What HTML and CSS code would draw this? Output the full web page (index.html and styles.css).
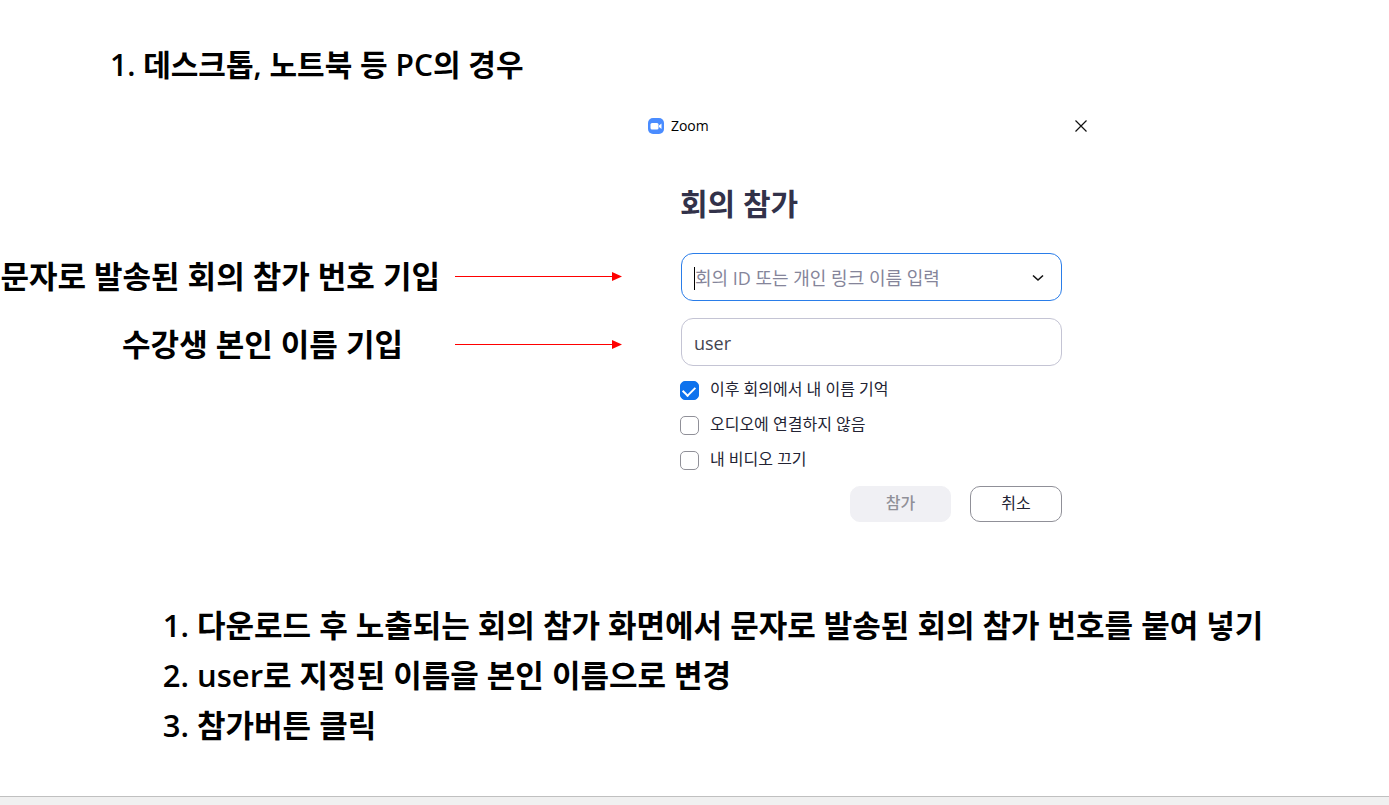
FILE: index.html
```
<!DOCTYPE html>
<html lang="ko">
<head>
  <meta charset="UTF-8" />
  <meta name="viewport" content="width=device-width, initial-scale=1.0"/>
  <title>Zoom 회의 참가 안내</title>
  <link rel="stylesheet" href="styles.css">
</head>
<body>

  <main>
    <h1>1. 데스크톱, 노트북 등 PC의 경우</h1>

    <div class="guide">
      <div class="notes">
        <div class="note">
          <p>문자로 발송된 회의 참가 번호 기입</p>
          <svg class="arrow" width="167" height="10" viewBox="0 0 167 10"><path d="M0 5.5h158" stroke="#f00"/><path d="M157 1l10 4.500-10 4.500z" fill="#f00"/></svg>
        </div>
        <div class="note note-name">
          <p>수강생 본인 이름 기입</p>
          <svg class="arrow" width="167" height="10" viewBox="0 0 167 10"><path d="M0 5.5h158" stroke="#f00"/><path d="M157 1l10 4.500-10 4.500z" fill="#f00"/></svg>
        </div>
      </div>

      <section class="dialog">
        <div class="titlebar">
          <svg width="18" height="18" viewBox="0 0 18 18">
            <rect x="1" y="1" width="16" height="16" rx="5" fill="#4a8cff"/>
            <rect x="3.500" y="6" width="8" height="6.500" rx="1.500" fill="#fff"/>
            <path d="M12 8.500l2.500-2v5.500l-2.500-2z" fill="#fff"/>
          </svg>
          <span>Zoom</span>
          <button class="close" type="button" aria-label="닫기">
            <svg width="14" height="14" viewBox="0 0 14 14"><path d="M1.500 1.500l11 11M12.500 1.500l-11 11" stroke="#111" stroke-width="1.200"/></svg>
          </button>
        </div>

        <form class="join">
          <h2>회의 참가</h2>
          <div class="field active">
            <span class="caret"></span>
            <input type="text" placeholder="회의 ID 또는 개인 링크 이름 입력" aria-label="회의 ID">
            <button class="drop" type="button" aria-label="최근 회의">
              <svg width="12" height="8" viewBox="0 0 12 8"><path d="M1 1.500l5 4.500 5-4.500" fill="none" stroke="#111" stroke-width="1.600"/></svg>
            </button>
          </div>
          <div class="field">
            <input type="text" value="user" aria-label="이름">
          </div>

          <div class="options">
            <label><input type="checkbox" checked><span>이후 회의에서 내 이름 기억</span></label>
            <label><input type="checkbox"><span>오디오에 연결하지 않음</span></label>
            <label><input type="checkbox"><span>내 비디오 끄기</span></label>
          </div>

          <div class="actions">
            <button class="btn submit" type="submit" disabled>참가</button>
            <button class="btn cancel" type="button">취소</button>
          </div>
        </form>
      </section>
    </div>

    <ol>
      <li>다운로드 후 노출되는 회의 참가 화면에서 문자로 발송된 회의 참가 번호를 붙여 넣기</li>
      <li>user로 지정된 이름을 본인 이름으로 변경</li>
      <li>참가버튼 클릭</li>
    </ol>
  </main>

  <footer></footer>

</body>
</html>
```
FILE: styles.css
```
* {
  box-sizing: border-box;
}

body {
  font-family: "Open Sans", "Noto Sans CJK KR", sans-serif;
  background: #fff;
  color: #000;
  margin: 0;
  display: flex;
  flex-direction: column;
  min-height: 100vh;
}

main {
  flex: 1;
  padding-top: 40px;
}

h1, h2, p, ol {
  margin: 0;
}

h1, .note, ol {
  font-size: 31px;
  font-weight: 600;
  line-height: 50px;
}

h1 {
  font-size: 30px;
  padding-left: 110px;
}

/* callouts on the left, join window on the right */
.guide {
  display: grid;
  grid-template-columns: 46% minmax(0, 457px);
  margin-top: 20px;
}

.notes {
  display: flex;
  flex-direction: column;
  gap: 18px;
  padding-top: 141px;
  padding-right: 17px;
}

.note {
  display: flex;
  align-items: center;
  justify-content: flex-end;
  gap: 15px;
  white-space: nowrap;
}

.note-name {
  gap: 52px;
}

.arrow {
  flex: none;
}

.titlebar {
  display: flex;
  align-items: center;
  gap: 6px;
  height: 32px;
  padding: 0 8px;
  font-size: 14px;
}

.titlebar span {
  padding-bottom: 2px;
}

button {
  font-family: inherit;
}

.close, .drop {
  display: flex;
  background: none;
  border: 0;
  padding: 0;
}

.close {
  margin-left: auto;
}

.join {
  padding: 42px 34px 0 41px;
}

h2 {
  font-size: 30px;
  line-height: 40px;
  color: #32324a;
  margin-bottom: 29px;
}

.field {
  display: flex;
  align-items: center;
  height: 48px;
  padding: 2px 17px 0 12px;
  margin-left: 1px;
  border: 1px solid #c4c4d4;
  border-radius: 12px;
  margin-bottom: 17px;
}

.field.active {
  border-color: #2a7de9;
}

.field input {
  flex: 1;
  min-width: 0;
  border: 0;
  outline: 0;
  padding: 0;
  background: none;
  font-family: inherit;
  font-size: 18px;
  color: #444450;
}

.field input::placeholder {
  color: #85859a;
}

.caret {
  width: 1px;
  height: 23px;
  background: #000;
}

.options {
  margin-top: -10px;
}

.options label {
  display: flex;
  align-items: center;
  gap: 11px;
  height: 35px;
  font-size: 16px;
  color: #232333;
}

.options span {
  padding-bottom: 5px;
}

.options input {
  appearance: none;
  display: grid;
  place-items: center;
  width: 19px;
  height: 19px;
  margin: 0;
  border: 1px solid #909098;
  border-radius: 5px;
}

.options input:checked {
  background: #0e72ed;
  border-color: #0e72ed;
}

.options input:checked::before {
  content: "";
  width: 10px;
  height: 6px;
  border: solid #fff;
  border-width: 0 0 2px 2px;
  transform: translateY(-1px) rotate(-45deg);
}

.actions {
  display: flex;
  justify-content: flex-end;
  gap: 19px;
  margin-top: 8px;
}

.btn {
  height: 36px;
  width: 92px;
  padding: 0 0 4px;
  border: 1px solid #909098;
  border-radius: 10px;
  background: #fff;
  color: #232333;
  font-size: 16px;
}

.submit {
  width: 101px;
  background: #f0f0f4;
  border-color: #f0f0f4;
  color: #909098;
  font-weight: 500;
}

ol {
  margin-top: 78px;
  padding-left: 197px;
}

footer {
  height: 9px;
  background: #f0f0f0;
  border-top: 1px solid #c0c0c0;
}
```
